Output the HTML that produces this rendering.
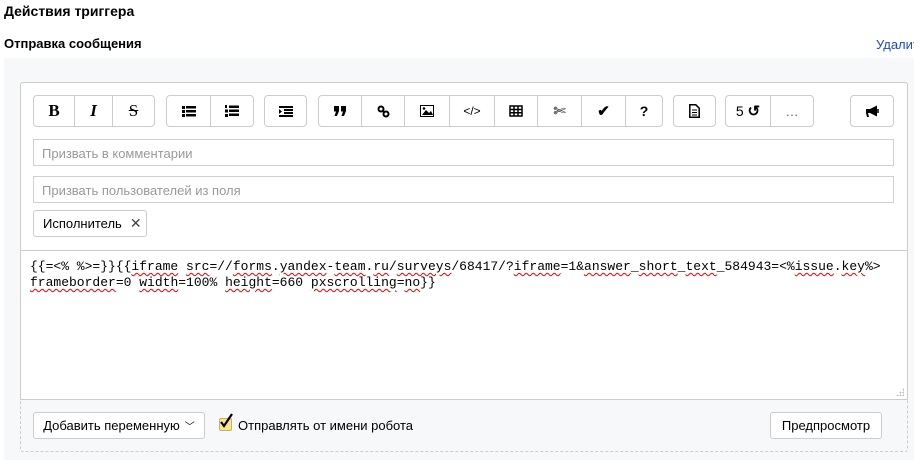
<!DOCTYPE html>
<html><head><meta charset="utf-8"><style>
*{box-sizing:border-box;margin:0;padding:0}
body{width:914px;height:460px;overflow:hidden;background:#fff;font-family:"Liberation Sans",Arial,sans-serif;font-size:13px;color:#000;position:relative}
.a{position:absolute}
.b{position:absolute;top:95px;height:32px;border:1px solid #ccc;border-radius:4px;background:#fff;display:flex}
.b>div{height:30px;display:flex;align-items:center;justify-content:center;border-right:1px solid #ccc;font-size:13px}
.b>div:last-child{border-right:none}
.inp{position:absolute;left:33px;width:861px;height:27px;border:1px solid #d0d0d0;background:#fff;color:#999;padding:6px 8px;font-size:13px}
.btn{position:absolute;height:28px;border:1px solid #ccc;border-radius:3px;background:#fff;font-size:13px;display:flex;align-items:center;justify-content:center}
.mono{font-family:"Liberation Mono","DejaVu Sans Mono",monospace;font-size:13px;line-height:16px}
.u{text-decoration:underline wavy #e00;text-decoration-thickness:1px;text-underline-offset:2px}
</style></head><body>
<div class="a" style="left:4px;top:3px;font-weight:bold;font-size:14px">Действия триггера</div>
<div class="a" style="left:4px;top:36px;font-weight:bold;font-size:13px">Отправка сообщения</div>
<div class="a" style="left:876px;top:37px;color:#1a4ad6;font-size:13px;white-space:nowrap">Удалить</div>
<div class="a" style="left:4px;top:58px;width:910px;height:402px;background:#f7f8fa"></div>
<div class="a" style="left:20px;top:82px;width:888px;height:318px;background:#fff;border:1px solid #ccc;border-radius:3px 3px 0 0"></div>
<div class="a" style="left:21px;top:250px;width:886px;height:1px;background:#ccc"></div>
<div class="a" style="left:20px;top:399px;width:888px;height:53px;border:1px dashed #ccc;border-top:none;border-radius:0 0 3px 3px"></div>

<div class="b" style="left:33px"><div style="width:41px;font-family:'Liberation Serif',serif;font-weight:bold;font-size:17px">B</div><div style="width:38px;font-family:'Liberation Serif',serif;font-style:italic;font-weight:bold;font-size:17px">I</div><div style="width:41px;font-family:'Liberation Serif',serif;font-size:17px;text-decoration:line-through">S</div></div>
<div class="b" style="left:166px"><div style="width:44px"><svg width="14" height="11"><g fill="#000"><rect x="0" y="0" width="3" height="3"/><rect x="0" y="4" width="3" height="3"/><rect x="0" y="8" width="3" height="3"/><rect x="4" y="0" width="10" height="2.5"/><rect x="4" y="4" width="10" height="2.5"/><rect x="4" y="8" width="10" height="2.5"/></g></svg></div><div style="width:42px"><svg width="14" height="12"><g fill="#000"><rect x="0" y="0" width="2" height="3"/><rect x="0" y="4.5" width="3" height="3"/><rect x="0" y="9" width="3" height="3"/><rect x="4" y="0.5" width="10" height="2.5"/><rect x="4" y="4.5" width="10" height="2.5"/><rect x="4" y="8.5" width="10" height="2.5"/></g></svg></div></div>
<div class="b" style="left:264px"><div style="width:41px"><svg width="14" height="11"><g fill="#000"><rect x="0" y="0" width="14" height="2"/><rect x="5" y="3" width="9" height="2"/><rect x="5" y="6" width="9" height="2"/><rect x="0" y="9" width="14" height="2"/><path d="M0 3l3 2.5-3 2.5z"/></g></svg></div></div>
<div class="b" style="left:318px"><div style="width:43px"><svg width="13" height="10"><g fill="#000"><path d="M0 0h5v5l-2 5H0.5l1.5-4.5H0z"/><path d="M7 0h5v5l-2 5H7.5l1.5-4.5H7z"/></g></svg></div><div style="width:43px"><svg width="13" height="13"><g fill="none" stroke="#000" stroke-width="2"><circle cx="4" cy="4" r="2.5"/><circle cx="9" cy="9" r="2.5"/><path d="M5.5 5.5l2 2"/></g></svg></div><div style="width:45px"><svg width="14" height="12"><rect x="0.5" y="0.5" width="13" height="11" fill="none" stroke="#000"/><path d="M2 10l4-5 3 3 2-2 2 4z" fill="#000"/><circle cx="4" cy="3.5" r="1.3" fill="#000"/></svg></div><div style="width:45px;font-size:12px">&lt;/&gt;</div><div style="width:43px"><svg width="14" height="12"><g fill="none" stroke="#000" stroke-width="1.5"><rect x="1" y="1" width="12" height="10"/><path d="M1 4.5h12M1 7.8h12M5 1v10M9 1v10"/></g></svg></div><div style="width:44px;font-size:15px">✄</div><div style="width:44px;font-size:15px;font-weight:bold">✔</div><div style="width:36px;font-weight:bold;font-size:14px">?</div></div>
<div class="b" style="left:673px"><div style="width:41px"><svg width="11" height="14"><path d="M0.8 0.8h6l3.4 3.4v9H0.8z" fill="none" stroke="#000" stroke-width="1.5"/><path d="M3 6h5M3 8.5h5M3 11h5" stroke="#000"/></svg></div></div>
<div class="b" style="left:725px"><div style="width:45px;font-size:14px">5&nbsp;<b style="font-size:15px">↺</b></div><div style="width:42px;color:#555">…</div></div>
<div class="b" style="left:850px"><div style="width:42px"><svg width="15" height="13"><path d="M1 4h4l7-3.5v11L5 8H3l1 4H2L1 8z" fill="#000"/><path d="M13 4v4" stroke="#000" stroke-width="1.5"/></svg></div></div>

<div class="inp" style="top:139px">Призвать в комментарии</div>
<div class="inp" style="top:176px">Призвать пользователей из поля</div>
<div class="btn" style="left:33px;top:210px;width:114px;height:27px;border-color:#ccc;justify-content:flex-start;padding-left:9px">Исполнитель <span style="margin-left:8px;color:#444;font-size:14px">✕</span></div>

<div class="a mono" style="left:30px;top:259px;white-space:pre">{{=&lt;% %&gt;=}}{{<span class="u">iframe</span> <span class="u">src</span>=//<span class="u">forms</span>.<span class="u">yandex</span>-<span class="u">team</span>.<span class="u">ru</span>/<span class="u">surveys</span>/68417/?<span class="u">iframe</span>=1&amp;<span class="u">answer</span>_<span class="u">short</span>_<span class="u">text</span>_584943=&lt;%<span class="u">issue</span>.<span class="u">key</span>%&gt;
<span class="u">frameborder</span>=0 <span class="u">width</span>=100% <span class="u">height</span>=660 <span class="u">pxscrolling</span>=<span class="u">no</span>}}</div>
<div class="a" style="left:896px;top:388px;width:8px;height:8px;background:radial-gradient(#bbb 40%,transparent 45%) 0 0/3px 3px;clip-path:polygon(100% 0,100% 100%,0 100%)"></div>

<div class="btn" style="left:33px;top:412px;width:172px;height:27px">Добавить переменную <span style="margin-left:5px;font-size:10px">﹀</span></div>
<div class="a" style="left:219px;top:418px;width:13px;height:13px;background:#fde58a;border:1px solid #c9b15a;border-radius:2px"></div>
<svg class="a" style="left:219px;top:413px" width="16" height="17"><path d="M2 9l3 4L13 1" fill="none" stroke="#000" stroke-width="2.2"/></svg>
<div class="a" style="left:238px;top:418px">Отправлять от имени робота</div>
<div class="btn" style="left:770px;top:412px;width:112px;height:27px">Предпросмотр</div>
</body></html>
